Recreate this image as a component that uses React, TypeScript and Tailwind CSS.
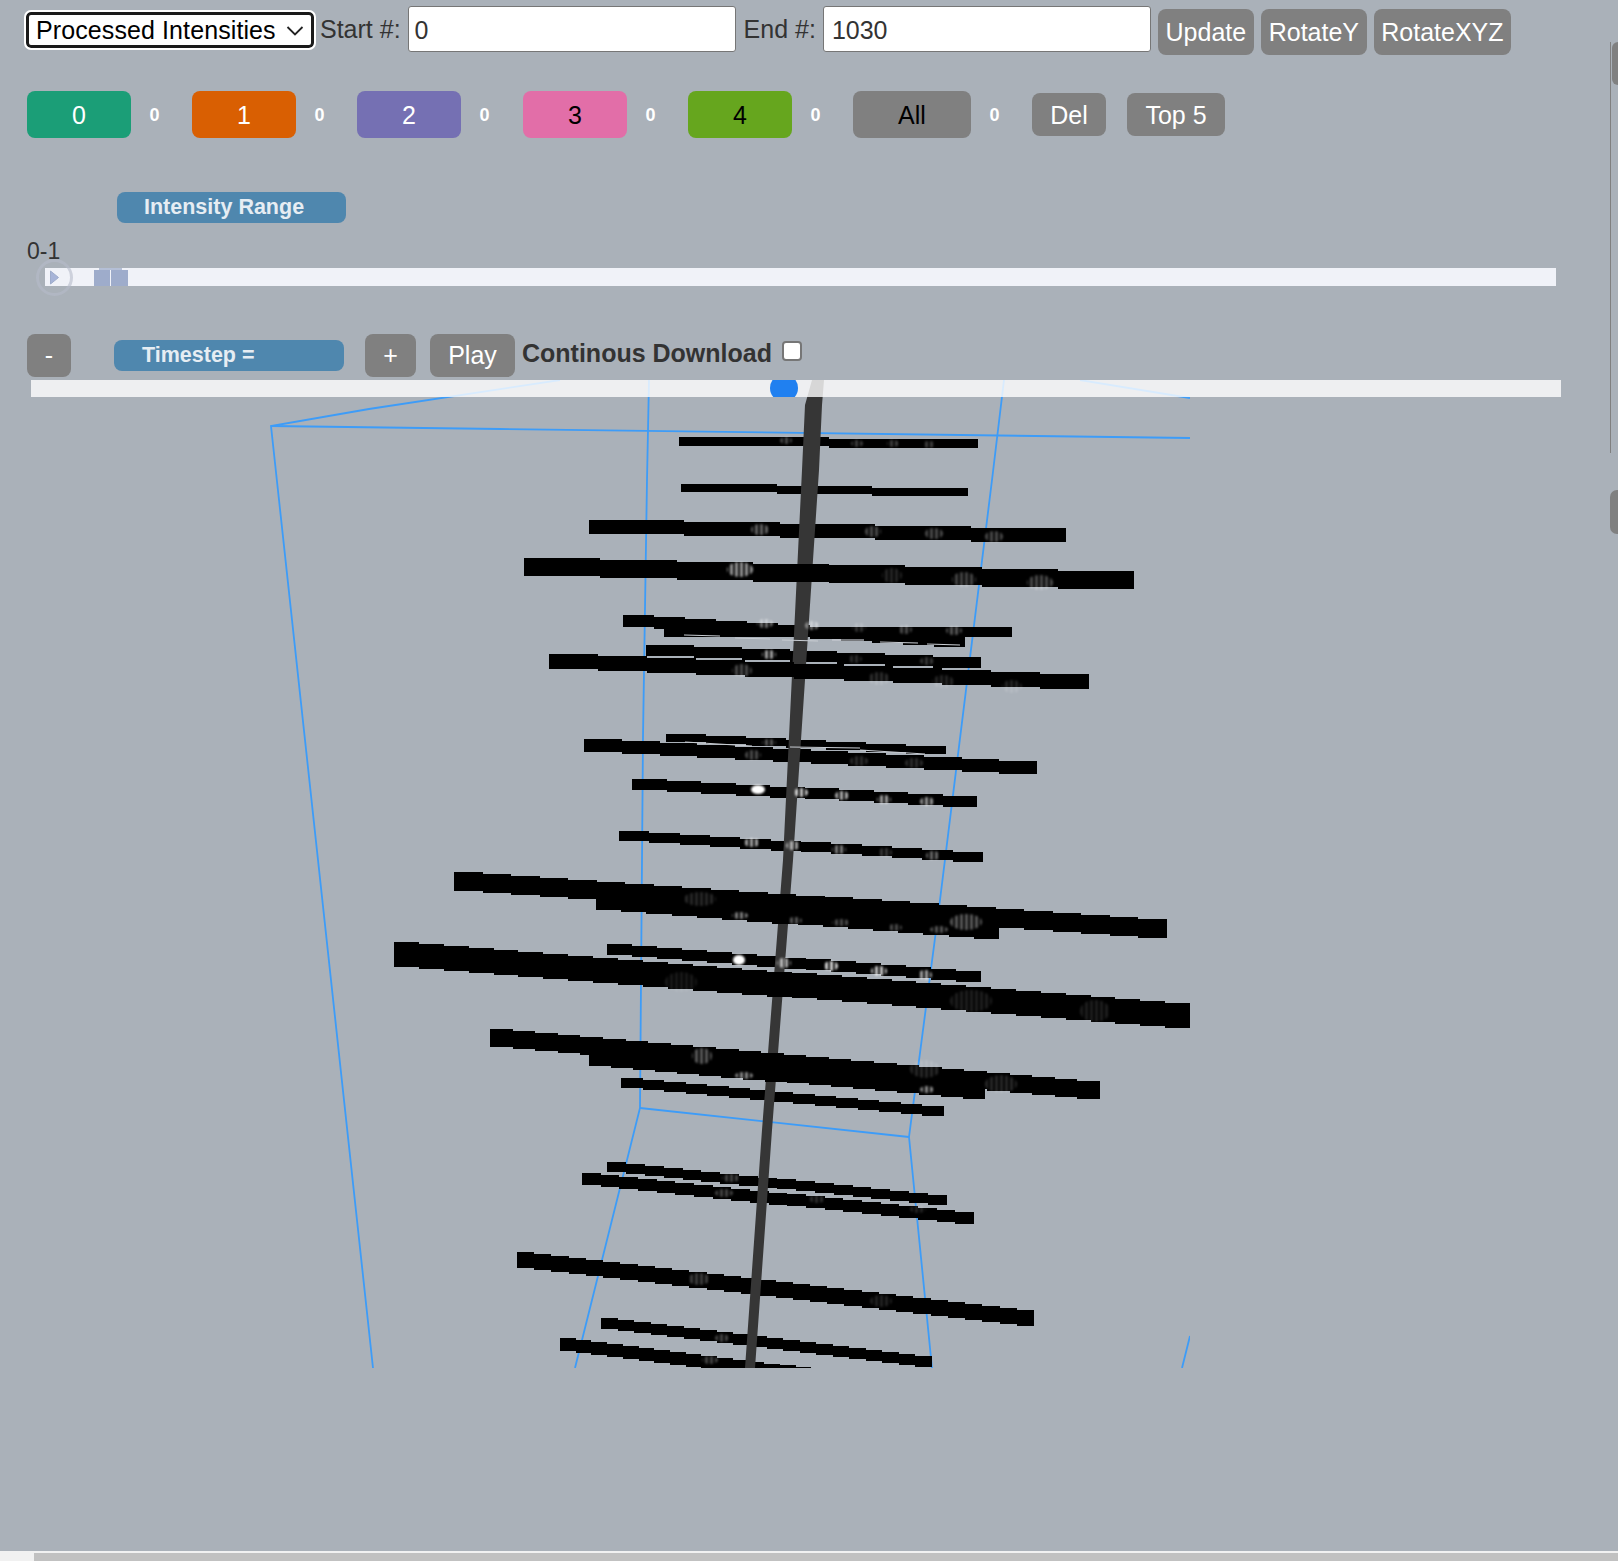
type Bar = { x1: number; y1: number; x2: number; y2: number; t: number; top?: boolean };

const font = "[font-family:'Liberation_Sans',Arial,sans-serif]";

// x1,y1 top left corner, x2,y2 top right corner, t thickness
const bars: Bar[] = [
  { x1: 679, y1: 436, x2: 978, y2: 440, t: 8 },
  { x1: 681, y1: 483, x2: 968, y2: 489, t: 7 },
  { x1: 589, y1: 519, x2: 1066, y2: 529, t: 13 },
  { x1: 524, y1: 557, x2: 1134, y2: 572, t: 17, top: true },
  { x1: 623, y1: 614, x2: 965, y2: 636, t: 11 },
  { x1: 664, y1: 627, x2: 1012, y2: 627, t: 9 },
  { x1: 646, y1: 644, x2: 981, y2: 658, t: 10 },
  { x1: 549, y1: 653, x2: 1089, y2: 675, t: 14, top: true },
  { x1: 666, y1: 733, x2: 946, y2: 747, t: 7 },
  { x1: 584, y1: 738, x2: 1037, y2: 762, t: 12 },
  { x1: 632, y1: 778, x2: 977, y2: 797, t: 10 },
  { x1: 619, y1: 830, x2: 983, y2: 853, t: 9 },
  { x1: 454, y1: 871, x2: 1167, y2: 920, t: 18, top: true },
  { x1: 596, y1: 887, x2: 999, y2: 918, t: 21, top: true },
  { x1: 607, y1: 943, x2: 981, y2: 972, t: 10 },
  { x1: 394, y1: 941, x2: 1190, y2: 1004, t: 24, top: true },
  { x1: 490, y1: 1028, x2: 1100, y2: 1082, t: 17, top: true },
  { x1: 589, y1: 1042, x2: 985, y2: 1077, t: 22, top: true },
  { x1: 621, y1: 1077, x2: 944, y2: 1107, t: 9 },
  { x1: 607, y1: 1161, x2: 947, y2: 1196, t: 9 },
  { x1: 582, y1: 1172, x2: 974, y2: 1213, t: 11 },
  { x1: 517, y1: 1251, x2: 1034, y2: 1311, t: 15 },
  { x1: 601, y1: 1317, x2: 932, y2: 1357, t: 10 },
  { x1: 560, y1: 1337, x2: 1000, y2: 1392, t: 12 },
];

// bright blotches on the bars: x, y, w, h, opacity
const spots: number[][] = [
  [780, 437, 12, 7, 0.3], [851, 440, 12, 7, 0.25], [887, 440, 12, 7, 0.25], [923, 441, 12, 7, 0.25],
  [751, 524, 18, 11, 0.4], [865, 526, 16, 11, 0.3], [925, 528, 18, 11, 0.3], [985, 531, 18, 11, 0.3],
  [727, 562, 26, 15, 0.6], [882, 568, 20, 15, 0.15], [952, 572, 24, 15, 0.28], [1027, 575, 26, 15, 0.3],
  [757, 619, 16, 9, 0.45], [805, 621, 14, 9, 0.45], [852, 623, 14, 9, 0.2], [898, 625, 14, 9, 0.3], [946, 626, 16, 9, 0.35],
  [762, 650, 14, 9, 0.65], [848, 655, 14, 8, 0.18], [920, 657, 14, 8, 0.22],
  [732, 664, 20, 13, 0.3], [868, 672, 22, 13, 0.18], [932, 675, 22, 13, 0.15], [1002, 680, 20, 13, 0.15],
  [762, 739, 14, 7, 0.35], [745, 750, 16, 10, 0.3], [850, 756, 18, 10, 0.18], [905, 758, 18, 10, 0.18],
  [751, 785, 14, 9, 1], [794, 788, 14, 9, 0.8], [835, 791, 14, 9, 0.7], [877, 795, 14, 9, 0.65], [920, 797, 14, 9, 0.6],
  [744, 838, 16, 9, 0.65], [786, 841, 14, 9, 0.65], [832, 845, 14, 9, 0.5], [878, 848, 14, 9, 0.22], [926, 851, 14, 9, 0.42],
  [684, 892, 32, 14, 0.16], [950, 914, 32, 16, 0.36], [732, 912, 16, 7, 0.5], [788, 917, 14, 7, 0.35], [832, 919, 18, 7, 0.3], [888, 924, 14, 7, 0.3], [930, 926, 18, 7, 0.35],
  [733, 955, 12, 10, 1], [777, 958, 14, 10, 0.7], [824, 961, 14, 10, 0.85], [871, 966, 16, 10, 0.8], [918, 970, 14, 10, 0.65],
  [665, 972, 32, 20, 0.1], [950, 990, 42, 22, 0.12], [1080, 1000, 30, 22, 0.12],
  [692, 1048, 20, 16, 0.36], [735, 1072, 18, 7, 0.55], [920, 1086, 14, 7, 0.55], [910, 1060, 30, 18, 0.16], [985, 1075, 32, 18, 0.16],
  [722, 1174, 18, 8, 0.28], [715, 1189, 18, 8, 0.28], [809, 1195, 16, 8, 0.18], [910, 1205, 16, 8, 0.14],
  [688, 1273, 22, 12, 0.25], [870, 1295, 22, 12, 0.14], [715, 1334, 14, 8, 0.28], [702, 1356, 16, 8, 0.28],
];

// the thin pale slits between the overlapping bars
const slits: number[][] = [
  [684, 635, 720, 636], [735, 638, 770, 639], [782, 640, 818, 641], [832, 640, 864, 640], [880, 642, 918, 643], [927, 644, 960, 645],
  [685, 742, 752, 746], [790, 747, 860, 748], [860, 750, 925, 754],
];

// edges drop in small flat steps, like the low res texture in the picture
function stepped(b: Bar) {
  const t = b.t + 1;
  const n = Math.max(2, Math.round(Math.abs(b.y2 - b.y1) / 2));
  const dx = (b.x2 - b.x1) / n;
  const dy = (b.y2 - b.y1) / n;
  const top: string[] = [];
  const bottom: string[] = [];
  for (let i = 0; i < n; i++) {
    const xa = Math.round(b.x1 + dx * i);
    const xb = Math.round(b.x1 + dx * (i + 1));
    const y = Math.round(b.y1 + dy * (i + 0.5));
    top.push(`${xa},${y} ${xb},${y}`);
    bottom.unshift(`${xb},${y + t} ${xa},${y + t}`);
  }
  return [...top, ...bottom].join(" ");
}

function Scene() {
  return (
    <svg width="920" height="988" viewBox="270 380 920 988" className="block ml-[270px]">
      <defs>
        <pattern id="stripes" width="5" height="6" patternUnits="userSpaceOnUse">
          <rect width="3" height="6" fill="#fff" />
        </pattern>
        <filter id="soft">
          <feGaussianBlur stdDeviation="0.9" />
        </filter>
      </defs>
      <g fill="none" stroke="#3d9cf8" strokeWidth="1.8">
        <polyline points="560,380 369,409 271,426 373,1368" />
        <polyline points="271,426 500,429 1190,438" />
        <polyline points="1080,380 1190,398" />
        <polyline points="649,380 647,480 643,737 640,1108 575,1368" />
        <polyline points="1004,380 992,480 940,900 909,1137 932,1368" />
        <polyline points="640,1108 909,1137" />
        <polyline points="1190,1336 1182,1368" />
      </g>
      <g shapeRendering="crispEdges" fill="#000">
        {bars.filter((b) => !b.top).map((b, i) => (
          <polygon key={i} points={stepped(b)} />
        ))}
      </g>
      <polygon points="812,380 824,380 822,405 819,470 793,860 772,1130 755,1368 745,1368 762,1130 783,860 802,470 805,405" fill="#363636" />
      <g shapeRendering="crispEdges" fill="#000">
        {bars.filter((b) => b.top).map((b, i) => (
          <polygon key={i} points={stepped(b)} />
        ))}
      </g>
      <g filter="url(#soft)">
        {spots.map((s, i) => (
          <ellipse
            key={i}
            cx={s[0] + s[2] / 2}
            cy={s[1] + s[3] / 2}
            rx={s[2] / 2}
            ry={s[3] / 2}
            opacity={s[4]}
            fill={s[4] === 1 ? "#fff" : "url(#stripes)"}
          />
        ))}
      </g>
      <g stroke="#c8ccd2" strokeWidth="1.2">
        {slits.map((s, i) => (
          <line key={i} x1={s[0]} y1={s[1]} x2={s[2]} y2={s[3]} />
        ))}
      </g>
    </svg>
  );
}

function ColorButton({ label, className }: { label: string; className: string }) {
  return (
    <button type="button" className={`w-[104px] h-[47px] pt-[2px] rounded-lg text-[25px] ${className}`}>
      {label}
    </button>
  );
}

function Count({ className }: { className: string }) {
  return <span className={`w-[47px] pt-[2px] text-white font-bold text-[18px] text-center ${className}`}>0</span>;
}

function GrayButton({ label, className }: { label: string; className: string }) {
  return (
    <button type="button" className={`rounded-lg bg-[#808080] text-white text-[25px] ${className}`}>
      {label}
    </button>
  );
}

export default function App() {
  return (
    <div className={`relative h-[1561px] w-[1618px] overflow-hidden bg-[#aab1b9] text-[#333] ${font}`}>
      {/* top toolbar */}
      <div className="flex items-start h-[91px] pt-[6px] pl-[26px] text-[25px]">
        <div className="mt-[6px] w-[288px] h-[36px] pt-[2px] rounded-[5px] bg-white border-[3px] border-[#1a1a1a] outline-2 outline-white flex items-center pl-[7px] text-black">
          <span className="whitespace-nowrap tracking-[0.1px]">Processed Intensities</span>
          <svg width="18" height="10" viewBox="0 0 18 10" className="ml-[10px]">
            <path d="M1.5 1 L9 8.5 L16.5 1" fill="none" stroke="#222" strokeWidth="1.8" />
          </svg>
        </div>
        <span className="ml-[6px] mt-[8px] leading-[30px]">Start #:</span>
        <input readOnly value="0" className="ml-[7px] w-[328px] h-[46px] pt-[2px] rounded-[3px] border border-[#767676] bg-white px-[6px] text-[25px]" />
        <span className="ml-[8px] mt-[8px] leading-[30px]">End #:</span>
        <input readOnly value="1030" className="ml-[7px] w-[328px] h-[46px] pt-[2px] rounded-[3px] border border-[#767676] bg-white px-[8px] text-[25px]" />
        <GrayButton label="Update" className="ml-[7px] mt-[3px] pt-[2px] w-[96px] h-[46px]" />
        <GrayButton label="RotateY" className="ml-[7px] mt-[3px] pt-[2px] w-[106px] h-[46px]" />
        <GrayButton label="RotateXYZ" className="ml-[7px] mt-[3px] pt-[2px] w-[137px] h-[46px]" />
      </div>

      {/* cluster buttons */}
      <div className="flex items-center h-[47px] pl-[27px]">
        <ColorButton label="0" className="bg-[#1b9e77] text-white" />
        <Count className="mr-[14px]" />
        <ColorButton label="1" className="bg-[#d95f02] text-white" />
        <Count className="mr-[14px]" />
        <ColorButton label="2" className="bg-[#7570b3] text-white" />
        <Count className="mr-[15px]" />
        <ColorButton label="3" className="bg-[#e26ea8] text-black" />
        <Count className="mr-[14px]" />
        <ColorButton label="4" className="bg-[#66a61e] text-black" />
        <Count className="mr-[14px]" />
        <button type="button" className="w-[118px] h-[47px] pt-[2px] rounded-lg bg-[#808080] text-black text-[25px]">All</button>
        <Count className="mr-[14px]" />
        <GrayButton label="Del" className="w-[74px] h-[43px] pt-[3px]" />
        <GrayButton label="Top 5" className="ml-[21px] w-[98px] h-[43px] pt-[3px]" />
      </div>

      {/* intensity range */}
      <div className="mt-[54px] ml-[117px] w-[229px] h-[31px] rounded-lg bg-[#4f87ae] pl-[27px] text-[21.5px] leading-[30px] font-bold text-[#e6edf3]">
        Intensity Range
      </div>
      <div className="mt-[15px] ml-[27px] text-[23px] leading-[26px]">0-1</div>
      <div className="relative mt-[4px] ml-[45px] w-[1511px] h-[18px] bg-[#f0f2f8]">
        <div className="absolute left-[-9px] top-[-9px] size-[37px] rounded-full border-[3px] border-[#b6bac9]/60 flex items-center justify-center">
          <svg width="11" height="15" viewBox="0 0 11 15">
            <path d="M1.5 1 L9.5 7.5 L1.5 14 Z" fill="#a7b4d8" stroke="#9eaccb" strokeWidth="1" />
          </svg>
        </div>
        <div className="absolute left-[54px] top-0 w-[23px] h-[2px] bg-[#b4bfd6]" />
        <div className="absolute left-[49px] top-[2px] w-[16px] h-[16px] bg-[#9eaccb]" />
        <div className="absolute left-[66px] top-[2px] w-[17px] h-[16px] bg-[#9eaccb]" />
      </div>

      {/* timestep */}
      <div className="flex items-center h-[43px] mt-[48px] pl-[27px]">
        <GrayButton label="-" className="w-[44px] h-[43px]" />
        <div className="ml-[43px] w-[230px] h-[31px] rounded-lg bg-[#4f87ae] pl-[28px] text-[21.5px] leading-[30px] font-bold text-[#e6edf3]">
          Timestep =
        </div>
        <GrayButton label="+" className="ml-[21px] w-[51px] h-[43px]" />
        <GrayButton label="Play" className="ml-[14px] w-[85px] h-[43px]" />
        <span className="ml-[7px] mb-[4px] text-[25px] font-bold">Continous Download</span>
        <span className="ml-[10px] mb-[9px] size-[20px] rounded-[4px] border-2 border-[#767676] bg-white" />
      </div>

      {/* 3d view with the time slider lying over its top edge */}
      <div className="relative mt-[3px]">
        <Scene />
        <div className="absolute left-[31px] top-0 w-[1530px] h-[17px] overflow-hidden bg-white/80">
          <div className="absolute left-[739px] top-[-6px] size-[28px] rounded-full bg-[#2080f0]" />
        </div>
      </div>

      {/* clipped panel edge on the right */}
      <div className="absolute left-[1610px] top-[42px] w-px h-[411px] bg-[#808080]" />
      <div className="absolute left-[1612px] top-[42px] w-[12px] h-[43px] rounded-lg bg-[#808080]" />
      <div className="absolute left-[1610px] top-[490px] w-[14px] h-[44px] rounded-lg bg-[#808080]" />

      {/* page scrollbar */}
      <div className="absolute left-0 bottom-0 w-full h-[10px] bg-[#f1f1f1] pl-[34px] pt-[2px]">
        <div className="h-full w-full bg-[#c1c1c1]" />
      </div>
    </div>
  );
}
